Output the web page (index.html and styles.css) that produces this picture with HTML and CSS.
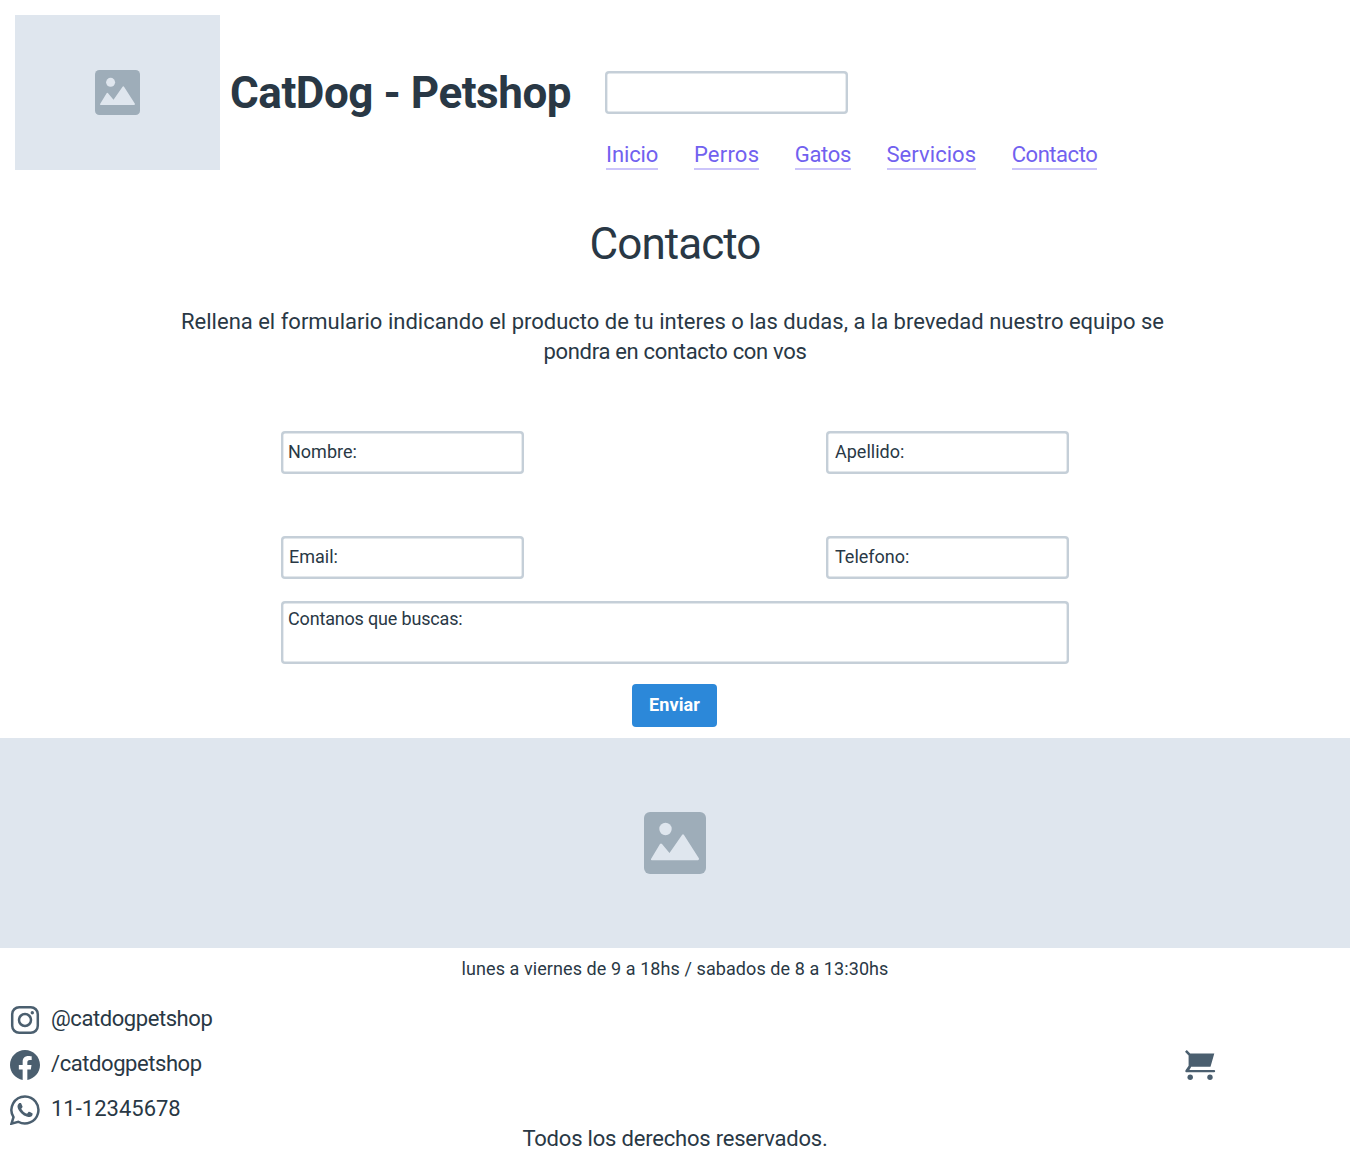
FILE: index.html
```html
<!DOCTYPE html>
<html lang="es">
<head>
<meta charset="utf-8">
<title>CatDog - Petshop</title>
<link rel="stylesheet" href="styles.css">
</head>
<body>
<header class="header">
  <div class="logo">
    <svg class="logo-icon" viewBox="0 0 62 62"><rect width="62" height="62" rx="6" fill="#9eadb9"/><circle cx="21.500" cy="17" r="6.200" fill="#dfe6ee"/><path d="M7 47 L16 32 Q17 31 18 32 L25.500 41 L38 23 Q39 21.500 40 23 L55 46.500 Q55 48.300 54 48.300 H8 Q6.500 48.300 7 47Z" fill="#dfe6ee"/></svg>
  </div>
  <div class="brand">CatDog - Petshop</div>
  <div class="header-side">
    <input class="search" type="text" aria-label="Buscar">
    <nav class="nav">
      <a class="nav-inicio" href="#">Inicio</a>
      <a class="nav-perros" href="#">Perros</a>
      <a class="nav-gatos" href="#">Gatos</a>
      <a class="nav-servicios" href="#">Servicios</a>
      <a class="nav-contacto" href="#">Contacto</a>
    </nav>
  </div>
</header>
<main class="main">
  <h1 class="title">Contacto</h1>
  <p class="intro"><span class="intro-first">Rellena el formulario indicando el producto de tu interes o las dudas, a la brevedad nuestro equipo se</span><br><span class="intro-last">pondra en contacto con vos</span></p>
  <form class="form">
    <div class="field field-nombre">Nombre:</div>
    <div class="field field-apellido">Apellido:</div>
    <div class="field field-email">Email:</div>
    <div class="field field-telefono">Telefono:</div>
    <div class="field message">Contanos que buscas:</div>
    <button class="submit" type="button">Enviar</button>
  </form>
</main>
<div class="banner">
  <svg class="banner-icon" viewBox="0 0 62 62"><rect width="62" height="62" rx="6" fill="#9eadb9"/><circle cx="21.500" cy="17" r="6.200" fill="#dfe6ee"/><path d="M7 47 L16 32 Q17 31 18 32 L25.500 41 L38 23 Q39 21.500 40 23 L55 46.500 Q55 48.300 54 48.300 H8 Q6.500 48.300 7 47Z" fill="#dfe6ee"/></svg>
</div>
<footer class="footer">
  <p class="hours">lunes a viernes de 9 a 18hs / sabados de 8 a 13:30hs</p>
  <div class="footer-row">
    <ul class="social">
      <li class="instagram"><svg class="icon" viewBox="0 0 30 30" fill="none" stroke="#4b5f6f" stroke-width="2.500"><rect x="2.200" y="2.200" width="25.600" height="25.600" rx="7"/><circle cx="15" cy="15" r="6"/><circle cx="22.300" cy="7.700" r="1.700" fill="#4b5f6f" stroke="none"/></svg><span>@catdogpetshop</span></li>
      <li class="facebook"><svg class="icon" viewBox="0 0 24 24" fill="#4b5f6f"><path d="M24 12.073c0-6.627-5.373-12-12-12s-12 5.373-12 12c0 5.990 4.388 10.954 10.125 11.854v-8.385H7.078v-3.470h3.047V9.430c0-3.007 1.792-4.669 4.533-4.669 1.312 0 2.686.235 2.686.235v2.953H15.830c-1.491 0-1.956.925-1.956 1.874v2.250h3.328l-.532 3.470h-2.796v8.385C19.612 23.027 24 18.062 24 12.073z"/></svg><span>/catdogpetshop</span></li>
      <li class="whatsapp"><svg class="icon" viewBox="0 0 24 24" fill="#4b5f6f"><path d="M17.472 14.382c-.297-.149-1.758-.867-2.030-.967-.273-.099-.471-.148-.670.150-.197.297-.767.966-.940 1.164-.173.199-.347.223-.644.075-.297-.150-1.255-.463-2.390-1.475-.883-.788-1.480-1.761-1.653-2.059-.173-.297-.018-.458.130-.606.134-.133.298-.347.446-.520.149-.174.198-.298.298-.497.099-.198.050-.371-.025-.520-.075-.149-.669-1.612-.916-2.207-.242-.579-.487-.500-.669-.510-.173-.008-.371-.010-.570-.010-.198 0-.520.074-.792.372-.272.297-1.040 1.016-1.040 2.479 0 1.462 1.065 2.875 1.213 3.074.149.198 2.096 3.200 5.077 4.487.709.306 1.262.489 1.694.625.712.227 1.360.195 1.871.118.571-.085 1.758-.719 2.006-1.413.248-.694.248-1.289.173-1.413-.074-.124-.272-.198-.570-.347"/><path d="M12 1.200A10.800 10.800 0 0 0 2.800 17.700L1.200 22.900L6.600 21.400A10.800 10.800 0 1 0 12 1.200Z" fill="none" stroke="#4b5f6f" stroke-width="2"/></svg><span>11-12345678</span></li>
    </ul>
    <svg class="cart" viewBox="0 0 30 30" fill="#4b5f6f"><path d="M0 1.800 L1.800 0 L5.200 3.400 H29.300 L25.500 16.700 H6.200 L4.400 19.900 H29 A1 1 0 0 1 29 22.300 H1 Q-.2 21.800 .5 20.300 L3.600 15.700 V5.400Z"/><circle cx="5.200" cy="27.300" r="2.700"/><circle cx="25" cy="27.300" r="2.700"/></svg>
  </div>
  <p class="rights">Todos los derechos reservados.</p>
</footer>
</body>
</html>
```
FILE: styles.css
```css
* { box-sizing: border-box; }
body { margin: 0; background: #fff; color: #293845; font-family: Roboto, "Liberation Sans", sans-serif; font-size: 22px; }
p, h1, ul { margin: 0; padding: 0; }
.header { display: flex; height: 170px; padding: 15px 0 0 15px; }
.logo { width: 205px; height: 155px; background: #dfe6ee; display: flex; align-items: center; justify-content: center; padding: 0 1px 1px 0; }
.logo-icon { width: 45px; height: 45px; }
.brand { width: 375px; padding-left: 10px; font-size: 44px; font-weight: 700; line-height: 156px; letter-spacing: -.47px; white-space: nowrap; }
.header-side { padding: 56px 0 0 10px; }
.search { display: block; width: 243px; height: 43px; border: 0; box-shadow: inset 0 0 0 2.400px #c5cfd8; border-radius: 4px; background: #fff; }
.nav { display: flex; gap: 35.600px; margin-top: 25px; padding-left: 1px; }
.nav a { height: 31px; line-height: 31px; color: #7161ef; text-decoration: none; border-bottom: 2px solid #cbc4fa; white-space: nowrap; }
.nav-inicio { letter-spacing: -.100px; }
.nav-perros { letter-spacing: .220px; }
.nav-gatos { letter-spacing: -.350px; }
.nav-servicios { letter-spacing: .050px; }
.nav-contacto { letter-spacing: -.460px; }
.title { padding-top: 44px; font-size: 44px; line-height: 60px; font-weight: 400; letter-spacing: -.950px; text-align: center; }
.intro { margin-top: 33px; text-align: center; line-height: 30px; white-space: nowrap; }
.intro-first { padding-right: 5px; }
.intro-last { letter-spacing: -.310px; }
.form { width: 788px; margin: 64px auto 0; display: grid; grid-template-columns: 243px 243px; justify-content: space-between; }
.field { height: 43px; box-shadow: inset 0 0 0 2.400px #c5cfd8; border-radius: 4px; font-size: 18px; line-height: 41px; padding-left: 7px; white-space: nowrap; }
.field-email, .field-telefono { margin-top: 62px; }
.field-email { padding-left: 8px; }
.field-apellido, .field-telefono { padding-left: 9px; }
.message { grid-column: 1 / 3; height: 63px; margin-top: 22px; line-height: 36px; letter-spacing: -.170px; }
.submit { grid-column: 1 / 3; justify-self: center; width: 85px; height: 43px; margin: 20px 1px 0 0; padding: 0 0 2px; border: 0; border-radius: 4px; background: #2c88d9; color: #fff; font: 700 18px Roboto, sans-serif; letter-spacing: .150px; }
.banner { height: 210px; margin-top: 11px; background: #dfe6ee; display: flex; align-items: center; justify-content: center; }
.banner-icon { width: 62px; height: 62px; }
.hours { padding-top: 6px; font-size: 18px; line-height: 30px; letter-spacing: .080px; text-align: center; }
.footer-row { display: flex; justify-content: space-between; margin-top: 20px; padding: 0 135px 0 10px; }
.social { list-style: none; }
.social li { display: flex; align-items: center; gap: 11px; height: 45px; line-height: 30px; padding-bottom: 15px; }
.instagram, .facebook { letter-spacing: -.430px; }
.icon { width: 30px; height: 30px; margin-top: 2px; }
.cart { width: 30px; height: 30px; margin-top: 46px; overflow: visible; }
.rights { margin-top: -15px; line-height: 30px; letter-spacing: -.200px; text-align: center; }
```
